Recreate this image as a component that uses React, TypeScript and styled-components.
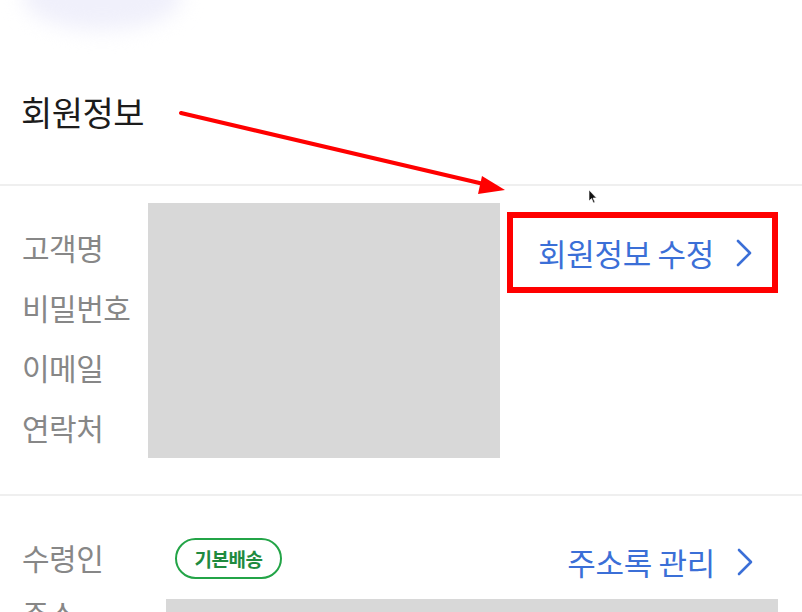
import React from "react";
import styled, { createGlobalStyle } from "styled-components";

const Global = createGlobalStyle`
  html, body { margin: 0; padding: 0; background: #ffffff; }
  body {
    font-family: "Noto Sans CJK KR", "Noto Sans", sans-serif;
    width: 802px; height: 612px; overflow: hidden;
  }
`;

const Page = styled.div`
  position: relative;
  width: 802px;
  height: 612px;
  overflow: hidden;
  background: #fff;
`;

const Header = styled.header`
  position: relative;
  height: 184px;
  display: flex;
  align-items: flex-start;
  padding: 0 0 0 21px;
  box-sizing: border-box;
  &::before {
    content: "";
    position: absolute;
    left: 22px;
    top: -38px;
    width: 160px;
    height: 68px;
    border-radius: 50%;
    background: #f0f0fb;
    filter: blur(10px);
  }
`;

const Title = styled.h1`
  margin: 89px 0 0 0;
  font-size: 34px;
  font-weight: 400;
  line-height: 46px;
  color: #1c1c1c;
  letter-spacing: -0.5px;
`;

const Divider = styled.div<{ $h?: number }>`
  height: ${(p) => p.$h ?? 2}px;
  background: #efefef;
`;

const InfoSection = styled.section`
  display: flex;
  align-items: flex-start;
  padding: 17px 0 0 22px;
  height: 308px;
  box-sizing: border-box;
`;

const LabelList = styled.div`
  width: 126px;
  flex-shrink: 0;
  display: flex;
  flex-direction: column;
  padding-top: 14px;
`;

const Label = styled.div`
  font-size: 30px;
  line-height: 60px;
  color: #878787;
  white-space: nowrap;
  letter-spacing: -0.5px;
`;

const Masked = styled.div<{ $h: number; $w?: number }>`
  height: ${(p) => p.$h}px;
  ${(p) => (p.$w ? `width: ${p.$w}px;` : "")}
  flex-shrink: 0;
  background: #d8d8d8;
`;

const Highlight = styled.div`
  margin: 9px 0 0 7px;
  width: 271px;
  height: 81px;
  flex-shrink: 0;
  border: 6px solid #ff0000;
  box-sizing: border-box;
  display: flex;
  align-items: center;
  justify-content: flex-end;
  padding-right: 20px;
`;

const LinkText = styled.a`
  display: flex;
  align-items: center;
  gap: 22px;
  font-size: 31px;
  line-height: 40px;
  color: #3b6fd7;
  text-decoration: none;
  white-space: nowrap;
  letter-spacing: -0.3px;
`;

const Chevron = () => (
  <svg width="16" height="28" viewBox="0 0 16 28" fill="none">
    <polyline points="2,2 14,14 2,26" stroke="#3b6fd7" strokeWidth="2.6" strokeLinecap="round" strokeLinejoin="round" />
  </svg>
);

const AddressSection = styled.section`
  padding: 0 24px 0 22px;
`;

const RecipientRow = styled.div`
  display: flex;
  align-items: center;
  height: 103px;
  padding-top: 22px;
  box-sizing: border-box;
`;

const RecipientLabel = styled(Label)`
  width: 153px;
  line-height: 40px;
  margin-top: -4px;
`;

const Badge = styled.span`
  display: inline-flex;
  align-items: center;
  justify-content: center;
  width: 107px;
  height: 41px;
  box-sizing: border-box;
  border: 2px solid #23a447;
  border-radius: 21px;
  color: #1f8b3f;
  font-size: 19px;
  font-weight: 700;
  letter-spacing: -0.5px;
`;

const Spacer = styled.div`
  flex: 1;
`;

const AddressLink = styled(LinkText)`
  margin-right: 25px;
  margin-top: 6px;
`;

const AddressRow = styled.div`
  display: flex;
  align-items: flex-start;
`;

const AddressLabel = styled(Label)`
  width: 144px;
  line-height: 40px;
  margin-top: -6px;
`;

const AddressBox = styled(Masked)`
  flex: 1;
`;

const Overlay = styled.svg`
  position: absolute;
  left: 0;
  top: 0;
  pointer-events: none;
`;

export default function App() {
  return (
    <Page>
      <Global />
      <Header>
        <Title>회원정보</Title>
      </Header>
      <Divider />
      <InfoSection>
        <LabelList>
          <Label>고객명</Label>
          <Label>비밀번호</Label>
          <Label>이메일</Label>
          <Label>연락처</Label>
        </LabelList>
        <Masked $h={255} $w={352} />
        <Highlight>
          <LinkText href="#">
            회원정보 수정
            <Chevron />
          </LinkText>
        </Highlight>
      </InfoSection>
      <Divider $h={2} />
      <AddressSection>
        <RecipientRow>
          <RecipientLabel>수령인</RecipientLabel>
          <Badge>기본배송</Badge>
          <Spacer />
          <AddressLink href="#">
            주소록 관리
            <Chevron />
          </AddressLink>
        </RecipientRow>
        <AddressRow>
          <AddressLabel>주소</AddressLabel>
          <AddressBox $h={40} />
        </AddressRow>
      </AddressSection>
      <Overlay width="802" height="612" viewBox="0 0 802 612">
        <line x1="181" y1="113" x2="488" y2="185" stroke="#ff0000" strokeWidth="4" strokeLinecap="round" />
        <polygon points="505,190 482,176 478,194" fill="#ff0000" />
        <path d="M589,190 L589,201 L591.5,198.5 L593.5,203 L595,202.3 L593,198 L596.5,198 Z" fill="#111" stroke="#fff" strokeWidth="0.6" />
      </Overlay>
    </Page>
  );
}
